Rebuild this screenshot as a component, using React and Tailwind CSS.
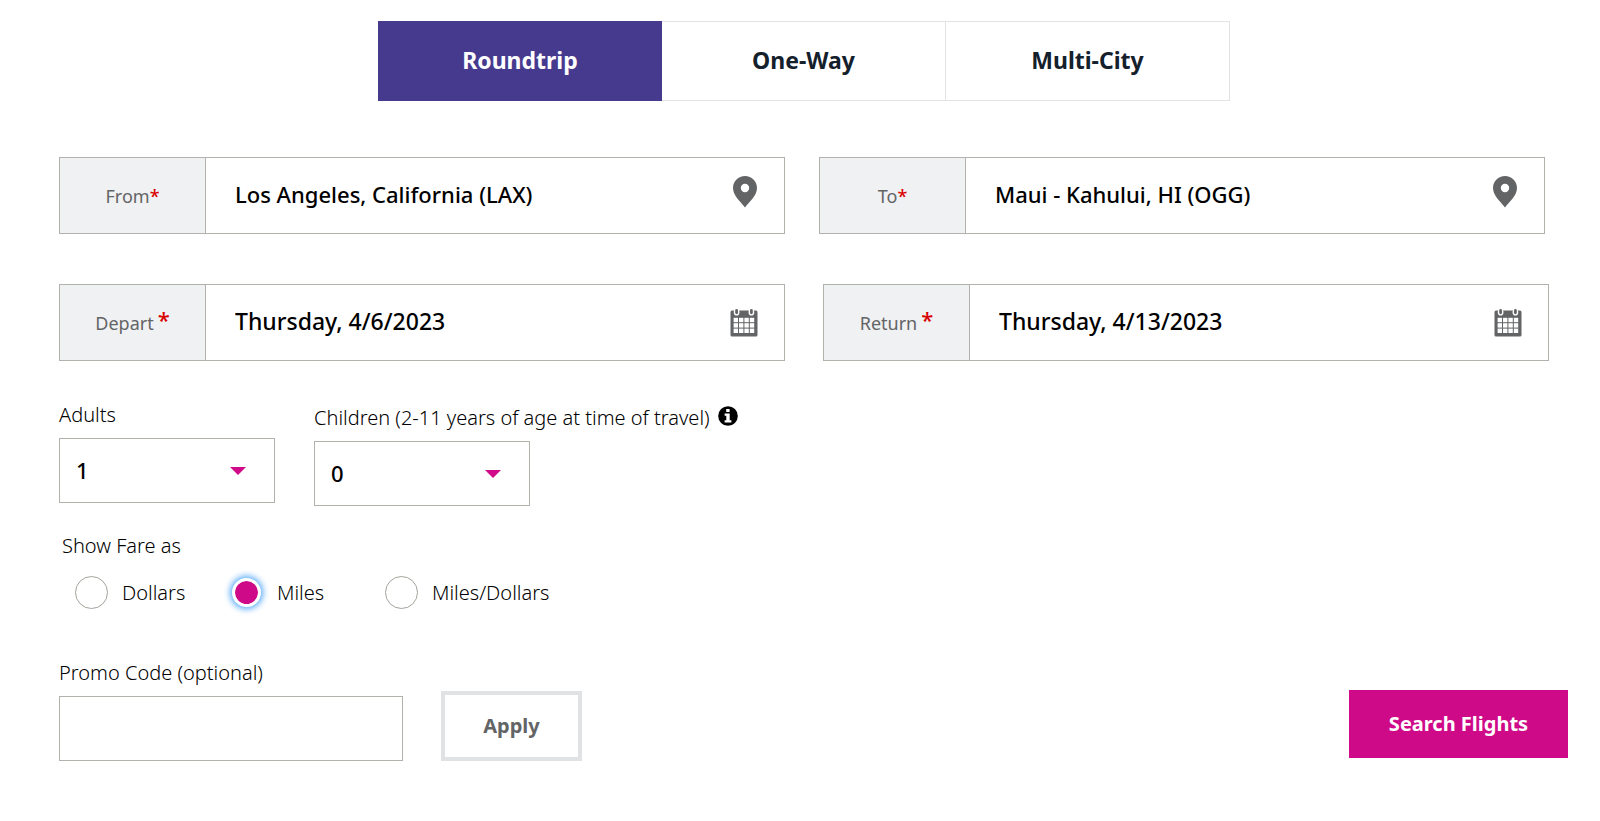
import { useState } from "react";

const PinIcon = () => (
  <svg viewBox="0 0 24 32" className="w-6 h-8 fill-[#636466]" aria-hidden="true">
    <path
      fillRule="evenodd"
      d="M12 0C5.4 0 0 5.2 0 11.9C0 19.6 7.6 25.4 12 31.4C16.4 25.4 24 19.6 24 11.9C24 5.2 18.6 0 12 0ZM12 7.8a4.2 4.2 0 1 1 0 8.4a4.2 4.2 0 1 1 0-8.4Z"
    />
  </svg>
);

const CalendarIcon = () => (
  <svg viewBox="0 0 28 28" className="w-7 h-7" aria-hidden="true">
    <rect x="0.5" y="1.5" width="27" height="26" rx="1.5" fill="#636466" />
    <rect x="3.8" y="0" width="5.6" height="6.6" rx="2.8" fill="#fff" />
    <rect x="18.6" y="0" width="5.6" height="6.6" rx="2.8" fill="#fff" />
    <rect x="5.2" y="0" width="2.8" height="5.2" rx="1.4" fill="#636466" />
    <rect x="20" y="0" width="2.8" height="5.2" rx="1.4" fill="#636466" />
    {[8.8, 14.2, 19.6].map((y) =>
      [3.6, 9, 14.4, 19.8].map((x) => (
        <rect key={`${x}-${y}`} x={x} y={y} width="4.4" height="4.4" fill="#fff" />
      ))
    )}
  </svg>
);

const InfoIcon = () => (
  <svg viewBox="0 0 20 20" className="w-5 h-5" aria-hidden="true">
    <circle cx="10" cy="10" r="9.8" fill="#000" />
    <rect x="8.2" y="3" width="3.4" height="3" fill="#fff" />
    <path d="M6.6 7.6H11.7V14.2H13.4V16.4H6.6V14.2H8.3V9.8H6.6Z" fill="#fff" />
  </svg>
);

const Field = ({ id, label, icon, value, onChange, date }) => (
  <div className="flex flex-1 h-[77px] border border-[#b2b2ad]">
    <label
      htmlFor={id}
      className="flex w-[146px] shrink-0 items-center justify-center border-r border-[#b2b2ad] bg-[#f0f1f3] text-lg text-[#636466]"
    >
      {label}
      {date ? (
        <span className="ml-1 pb-2 text-[22px] leading-6 font-medium text-[#d90000]">*</span>
      ) : (
        <span className="font-medium text-[#d90000]">*</span>
      )}
    </label>
    <input
      id={id}
      type="text"
      value={value}
      onChange={onChange}
      className={
        date
          ? "min-w-0 flex-1 pb-[2px] pl-[29px] text-[23px] font-medium text-black outline-none"
          : "min-w-0 flex-1 pb-[2px] pl-[29px] text-[22px] font-medium text-black outline-none"
      }
    />
    <div className={date ? "flex items-center pr-[26px]" : "flex items-center pr-[27px] pb-2"}>{icon}</div>
  </div>
);

const CountSelect = ({ id, value, onChange }) => (
  <div className="relative w-[216px]">
    <select
      id={id}
      value={value}
      onChange={onChange}
      className="block h-[65px] w-full appearance-none border border-[#b2b2ad] bg-white pl-4 text-[22px] font-medium text-black outline-none"
    >
      {[0, 1, 2, 3, 4, 5, 6, 7].map((n) => (
        <option key={n} value={n}>
          {n}
        </option>
      ))}
    </select>
    <svg
      viewBox="0 0 16 8"
      className="pointer-events-none absolute right-[29px] top-[29px] h-2 w-4 fill-[#d10a8a]"
      aria-hidden="true"
    >
      <path d="M0 0H16L8 8Z" />
    </svg>
  </div>
);

const tabs = ["Roundtrip", "One-Way", "Multi-City"];
const fares = ["Dollars", "Miles", "Miles/Dollars"];

const App = () => {
  const [tab, setTab] = useState("Roundtrip");
  const [fare, setFare] = useState("Miles");
  const [formData, setFormData] = useState({
    from: "Los Angeles, California (LAX)",
    to: "Maui - Kahului, HI (OGG)",
    depart: "Thursday, 4/6/2023",
    return: "Thursday, 4/13/2023",
    adults: "1",
    children: "0",
    promo: "",
  });

  const handleChange = (e) => {
    const { id, value } = e.target;
    setFormData({ ...formData, [id]: value });
  };

  return (
    <form
      onSubmit={(e) => e.preventDefault()}
      className="bg-white pt-[21px] pl-[59px] text-xl font-light text-black font-['Noto_Sans',sans-serif]"
    >
      <div className="mr-[51px] flex justify-center">
        {tabs.map((name) => (
          <button
            key={name}
            type="button"
            onClick={() => setTab(name)}
            className={
              tab === name
                ? "h-20 w-[284px] bg-[#463a8f] pb-[2px] text-[23px] font-bold text-white"
                : "h-20 w-[284px] border-y border-r border-[#e3e3e5] pb-[2px] text-[23px] font-bold text-[#14202b]"
            }
          >
            {name}
          </button>
        ))}
      </div>

      <div className="mt-14 mr-[55px] flex gap-[34px] font-normal">
        <Field id="from" label="From" icon={<PinIcon />} value={formData.from} onChange={handleChange} />
        <Field id="to" label="To" icon={<PinIcon />} value={formData.to} onChange={handleChange} />
      </div>
      <div className="mt-[50px] mr-[51px] flex gap-[38px] font-normal">
        <Field id="depart" label="Depart" icon={<CalendarIcon />} value={formData.depart} onChange={handleChange} date />
        <Field id="return" label="Return" icon={<CalendarIcon />} value={formData.return} onChange={handleChange} date />
      </div>

      <div className="mt-10 flex items-start gap-[39px]">
        <div>
          <label htmlFor="adults" className="mb-[9px] block leading-7">
            Adults
          </label>
          <CountSelect id="adults" value={formData.adults} onChange={handleChange} />
        </div>
        <div className="pt-[3px]">
          <div className="mb-[9px] flex h-7 items-center gap-2">
            <label htmlFor="children" className="leading-7">
              Children (2-11 years of age at time of travel)
            </label>
            <button type="button" aria-label="Children age information" className="pb-1">
              <InfoIcon />
            </button>
          </div>
          <CountSelect id="children" value={formData.children} onChange={handleChange} />
        </div>
      </div>

      <fieldset className="mt-[26px]">
        <legend className="pl-[3px] leading-7">Show Fare as</legend>
        <div className="mt-4 flex pl-4">
          {fares.map((name) => (
            <label key={name} className="flex w-[155px] items-center gap-[14px] whitespace-nowrap">
              <span className="flex w-[33px] shrink-0 justify-center">
                <input
                  type="radio"
                  name="fare"
                  checked={fare === name}
                  onChange={() => setFare(name)}
                  className="h-[33px] w-[33px] appearance-none rounded-full border border-[#a3a39d] bg-white outline-none checked:my-[2px] checked:h-[29px] checked:w-[29px] checked:border-3 checked:border-white checked:bg-[#cf0a88] checked:bg-clip-padding checked:shadow-[0_0_6px_2px_#58aaf8]"
                />
              </span>
              {name}
            </label>
          ))}
        </div>
      </fieldset>

      <div className="mt-[50px] mr-8 flex items-end">
        <div>
          <label htmlFor="promo" className="mb-[9px] block leading-7">
            Promo Code (optional)
          </label>
          <input
            id="promo"
            type="text"
            value={formData.promo}
            onChange={handleChange}
            className="block h-[65px] w-[344px] border border-[#b2b2ad] px-4 text-[22px] font-medium outline-none"
          />
        </div>
        <button type="button" className="ml-[38px] h-[70px] w-[141px] border-4 border-[#e1e2e4] text-xl font-bold text-[#636466]">
          Apply
        </button>
        <button type="submit" className="mb-[3px] ml-auto h-[68px] w-[219px] bg-[#cf0a88] text-xl font-bold text-white">
          Search Flights
        </button>
      </div>
    </form>
  );
};

export default App;
